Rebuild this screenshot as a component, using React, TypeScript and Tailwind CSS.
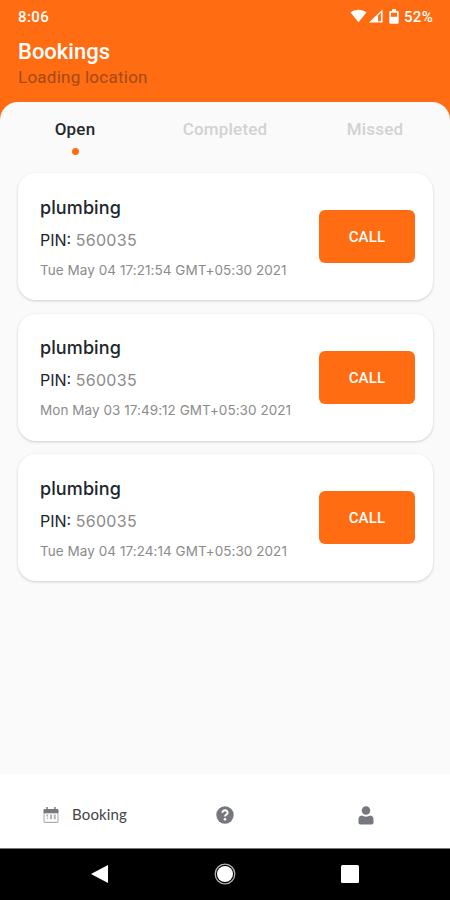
import React, { useState } from "react";

const bookings = [
  { service: "plumbing", pin: "560035", date: "Tue May 04 17:21:54 GMT+05:30 2021" },
  { service: "plumbing", pin: "560035", date: "Mon May 03 17:49:12 GMT+05:30 2021" },
  { service: "plumbing", pin: "560035", date: "Tue May 04 17:24:14 GMT+05:30 2021" },
];

const tabs = ["Open", "Completed", "Missed"];

const StatusBar = () => (
  <div className="flex h-8 items-center justify-between pl-[18px] pr-[17px] text-[15px] font-medium leading-8">
    <span className="pt-px tracking-[0.4px]">8:06</span>
    <div className="flex items-center">
      {/* Wifi */}
      <svg width="17" height="14" viewBox="0 0 18 14" className="mr-[2px]" fill="currentColor">
        <path d="M.6 3.4C5.2-.5 12.8-.5 17.4 3.4L9 13.6z" />
      </svg>
      {/* Signal */}
      <svg width="14" height="14" viewBox="0 0 15 14" className="mr-[6px]">
        <path d="M14.5 0v14H0z" fill="currentColor" />
        <path d="M9.7 6.5L12.7 3.5v9H9.7z" fill="#ff6c12" />
      </svg>
      {/* Battery */}
      <svg width="10" height="15" viewBox="0 0 10 15" className="mr-[5px]">
        <path d="M3 .3h4v1.6h1.4a1.3 1.3 0 0 1 1.3 1.3v10.2a1.3 1.3 0 0 1-1.3 1.3H1.6A1.3 1.3 0 0 1 .3 13.4V3.2a1.3 1.3 0 0 1 1.3-1.3H3z" fill="currentColor" />
        <path d="M2 3.7h6v4.1H2z" fill="#ff6c12" />
      </svg>
      <span className="pt-px tracking-[0.3px]">52%</span>
    </div>
  </div>
);

const BookingCard = ({ booking }: { booking: (typeof bookings)[number] }) => (
  <div className="flex h-[127px] items-center justify-between rounded-[18px] bg-white pl-[22px] pr-[18px] shadow-[0_1px_3px_rgba(0,0,0,0.18)]">
    <div className="flex flex-col pt-[2px] font-[Inter,sans-serif]">
      <div className="text-[18px] font-medium leading-6 tracking-[0.1px] text-[#20252b]">{booking.service}</div>
      <div className="mt-[8px] text-[16px] leading-6 text-[#8b8b8b]">
        <span className="text-[#20252b]">PIN:</span> <span className="tracking-[0.3px]">{booking.pin}</span>
      </div>
      <div className="mt-[8px] whitespace-nowrap text-[13.5px] leading-5 tracking-[0.05px] text-[#8b8b8b]">{booking.date}</div>
    </div>
    <button className="h-[53px] w-24 rounded-md bg-[#ff6c12] pt-[2px] text-[15px] font-medium tracking-[0.2px] text-white">CALL</button>
  </div>
);

export default function App() {
  const [active, setActive] = useState("Open");

  return (
    <div className="flex h-[900px] w-[450px] flex-col overflow-hidden bg-[#ff6c12] font-[Roboto,sans-serif]">
      {/* Header */}
      <div className="h-[102px] shrink-0 text-white">
        <StatusBar />
        <div className="px-[18px] pt-[7px]">
          <h1 className="text-[22px] font-medium leading-[26px]">Bookings</h1>
          <p className="text-[17px] leading-[25px] tracking-[0.25px] text-[#a34a15]">Loading location</p>
        </div>
      </div>

      {/* Content */}
      <div className="flex-1 rounded-t-[18px] bg-[#fafafa]">
        <div className="flex h-[71px]">
          {tabs.map((tab) => (
            <button
              key={tab}
              onClick={() => setActive(tab)}
              className={`flex flex-1 flex-col items-center pt-[15px] text-[17px] font-medium leading-6 tracking-[0.2px] ${active === tab ? "text-[#24282d]" : "text-[#d2d2d2]"}`}
            >
              {tab}
              {active === tab && <span className="mt-[7px] h-[7px] w-[7px] rounded-full bg-[#ff6c12]" />}
            </button>
          ))}
        </div>
        <div className="flex flex-col gap-[13.5px] pl-[18px] pr-[17px]">
          {bookings.map((booking, index) => (
            <BookingCard key={index} booking={booking} />
          ))}
        </div>
      </div>

      {/* Bottom tabs */}
      <div className="flex h-[74px] shrink-0 items-center bg-white pt-[8px] text-[#75797e]">
        <div className="flex w-[155px] items-center pl-[43px]">
          <svg width="16" height="16" viewBox="0 0 16 17" fill="currentColor">
            <path d="M3 0h1.6v2h6.8V0H13v2h1.5A1.5 1.5 0 0 1 16 3.5v3H0v-3A1.5 1.5 0 0 1 1.5 2H3z" />
            <path fillRule="evenodd" d="M0 6h16v9.5a1.5 1.5 0 0 1-1.5 1.5h-13A1.5 1.5 0 0 1 0 15.5zM1.2 7v8.3c0 .3.2.5.5.5h12.6c.3 0 .5-.2.5-.5V7z" opacity=".6" />
            <path d="M3 8h2v2H3zM7 8h2v5H7zM11 8h2v5h-2zM4 11h1v2H4z" opacity=".6" />
          </svg>
          <span className="ml-[13px] pb-[2px] font-[Lato,sans-serif] text-[15px] leading-5 tracking-[0.15px] text-[#444]">Booking</span>
        </div>
        <div className="flex w-[140px] justify-center">
          <svg width="18" height="18" viewBox="0 0 18 18">
            <circle cx="9" cy="9" r="8.7" fill="currentColor" />
            <path d="M6.3 6.9C6.4 3.3 11.8 3.6 11.6 6.9C11.5 8.7 9 8.6 9 10.5" fill="none" stroke="white" strokeWidth="1.9" />
            <circle cx="9" cy="13.2" r="1.3" fill="white" />
          </svg>
        </div>
        <div className="flex w-[142px] justify-center">
          <svg width="16" height="19" viewBox="0 0 16 19" fill="currentColor">
            <circle cx="8" cy="4.5" r="4.3" />
            <path d="M3.6 9.5c2.7 1.5 6.1 1.5 8.8 0C14.5 9.8 15.5 11.3 15.5 13.3v3.5c0 1-.8 1.7-1.7 1.7H2.2c-.9 0-1.7-.7-1.7-1.7v-3.5c0-2 1-3.5 3.1-3.8z" />
          </svg>
        </div>
      </div>

      {/* System navigation */}
      <div className="flex h-[52px] shrink-0 items-center justify-between border-t border-[#777] bg-black px-[91px] pb-[2px] text-white">
        <svg width="17" height="18" viewBox="0 0 17 18" fill="currentColor">
          <path d="M17 0v18L0 9z" />
        </svg>
        <svg width="22" height="22" viewBox="0 0 22 22">
          <circle cx="11" cy="11" r="9.8" fill="none" stroke="currentColor" strokeOpacity=".7" strokeWidth="1.3" />
          <circle cx="11" cy="11" r="8" fill="currentColor" />
        </svg>
        <svg width="18" height="18" viewBox="0 0 18 18" fill="currentColor">
          <rect width="18" height="18" rx="1.5" />
        </svg>
      </div>
    </div>
  );
}
